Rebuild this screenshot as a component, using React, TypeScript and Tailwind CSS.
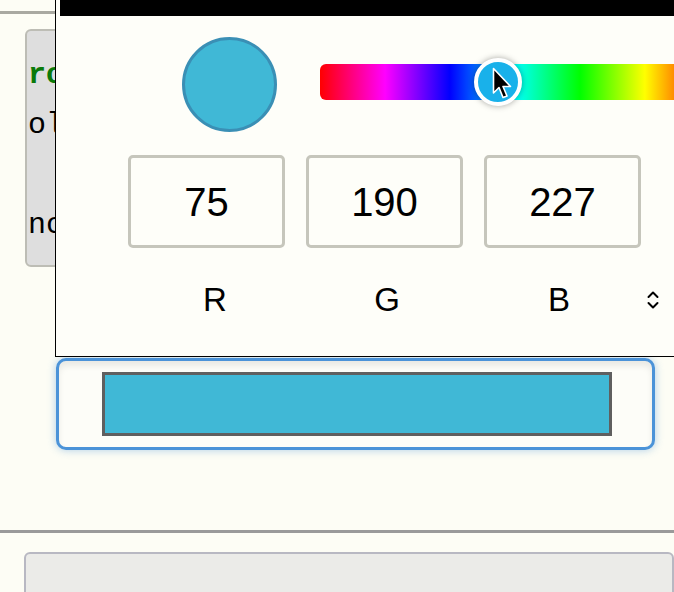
import React from 'react';

// RGB 取色弹层 — 盖在页面上方，底下是代码面板和色块按钮
const R = 75;
const G = 190;
const B = 227;

const HUE =
  'linear-gradient(90deg, #ff0000 0%, #ff00ff 16.7%, #0000ff 33.3%, #00ffff 50%, #00ff00 66.7%, #ffff00 83.3%, #ff0000 100%)';

export default function App() {
  // 截图里是抖动过的颜色，略偏青
  const swatch = '#40b8d6';

  return (
    <div className="relative h-[592px] w-[674px] overflow-hidden bg-[#fdfdf5] font-['Liberation_Sans',Arial,sans-serif] text-black">
      {/* 底层页面 */}
      <div className="pt-[11px]">
        <div className="h-[3px] bg-[#a9a9a1]" />
        <div className="ml-[25px] mt-[15px] h-[238px] rounded-md border-2 border-[#bdbdb5] bg-[#dedede] pl-[1px] pt-[19px] font-['Liberation_Mono',monospace] text-[30px] leading-[50px]">
          <div className="font-bold text-[#0a7a0a]">ro</div>
          <div>ol</div>
          <div>&nbsp;</div>
          <div>nc</div>
        </div>

        {/* 色块按钮 */}
        <div className="ml-[56px] mt-[91px] h-[92px] w-[599px] rounded-[10px] border-[3px] border-[#4b93d8] bg-[#fdfdf8] pl-[43px] pt-[11px] shadow-[inset_0_5px_6px_rgba(0,0,0,0.08),0_0_8px_rgba(74,147,216,0.45)]">
          <div
            className="h-[64px] w-[510px] border-[3px] border-[#5f5f5f]"
            style={{ background: swatch }}
          />
        </div>

        <div className="mt-[80px] h-[3px] bg-[#9a9a9a]" />
        <div className="ml-[24px] mt-[19px] h-[80px] rounded-md border-2 border-[#b8b8c2] bg-[#ebebe8]" />
      </div>

      {/* 取色弹层 */}
      <div className="absolute left-[55px] top-0 h-[357px] w-[640px] border-b border-l border-black bg-[#fefef9]">
        <div className="ml-[4px] h-[16px] bg-black" />

        <div className="mt-[21px] flex items-start pl-[126px]">
          <div
            className="h-[95px] w-[95px] shrink-0 rounded-full border-[3px] border-[#3a8fb5]"
            style={{ background: swatch }}
          />
          <div
            className="relative ml-[43px] mt-[27px] h-[36px] w-[390px] shrink-0 rounded-[6px]"
            style={{ background: HUE }}
          >
            <div className="absolute left-[154px] top-[-6px] h-[48px] w-[48px] rounded-full border-4 border-white bg-[#19b1ea] shadow-[0_0_6px_rgba(0,0,0,0.35)]" />
            <svg
              className="absolute left-[172px] top-[3px]"
              width="22"
              height="34"
              viewBox="0 0 22 34"
            >
              <path
                d="M1.5 1.5 L1.5 26 L7 20.5 L11 30.5 L15 29 L11 19.5 L18.5 19.5 Z"
                fill="#000"
                stroke="#fff"
                strokeWidth="1.6"
                strokeLinejoin="round"
              />
            </svg>
          </div>
        </div>

        <div className="mt-[23px] grid grid-cols-[157px_157px_157px] gap-x-[21px] pl-[72px]">
          {[R, G, B].map((v, i) => (
            <div
              key={i}
              className="flex h-[93px] items-center justify-center rounded-[5px] border-[3px] border-[#c6c6bc] text-[40px]"
            >
              {v}
            </div>
          ))}
        </div>

        <div className="mt-[35px] flex items-center pl-[73px]">
          <div className="grid grid-cols-[172px_172px_172px] text-center text-[33px] leading-none">
            <span>R</span>
            <span>G</span>
            <span>B</span>
          </div>
          <svg className="ml-[1px]" width="14" height="22" viewBox="0 0 14 22" fill="none">
            <path d="M2.5 8 L7 3.5 L11.5 8" stroke="#000" strokeWidth="2" strokeLinecap="round" strokeLinejoin="round" />
            <path d="M2.5 14 L7 18.5 L11.5 14" stroke="#000" strokeWidth="2" strokeLinecap="round" strokeLinejoin="round" />
          </svg>
        </div>
      </div>
    </div>
  );
}
